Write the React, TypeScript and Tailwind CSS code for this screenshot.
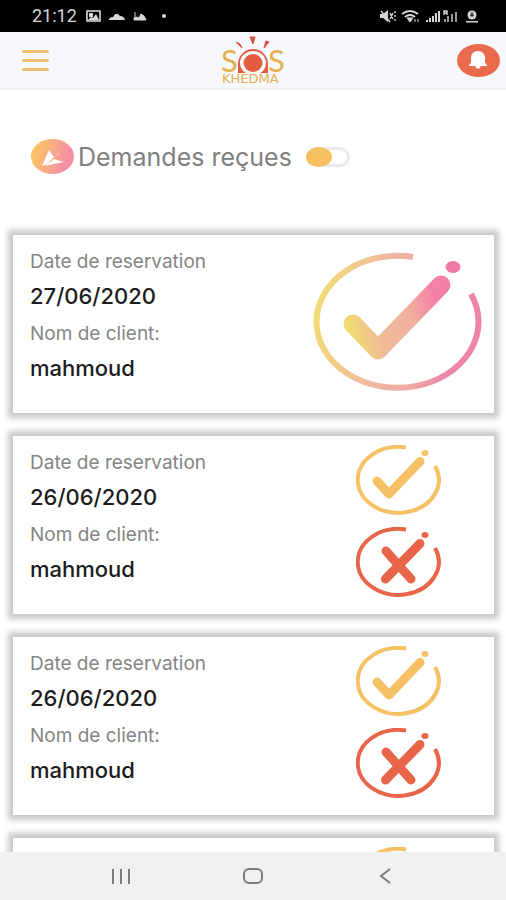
import { useId } from "react";
import clsx from "clsx";

type Reservation = {
  id: number;
  date: string;
  client: string;
  accepted: boolean;
};

const reservations: Reservation[] = [
  { id: 1, date: "27/06/2020", client: "mahmoud", accepted: true },
  { id: 2, date: "26/06/2020", client: "mahmoud", accepted: false },
  { id: 3, date: "26/06/2020", client: "mahmoud", accepted: false },
  { id: 4, date: "26/06/2020", client: "mahmoud", accepted: false },
];

const RING = "M100 5A81 66 0 1 0 158 42";

const AcceptedMark = () => {
  const gradient = useId();

  return (
    <svg viewBox="0 0 170 140" className="h-[140px] w-[170px]" fill="none" role="img" aria-label="Acceptée">
      <defs>
        <linearGradient id={gradient + "r"} gradientUnits="userSpaceOnUse" x1="0" y1="60" x2="165" y2="85">
          <stop offset="0" stopColor="#f3dc74" />
          <stop offset="0.4" stopColor="#efb9a0" />
          <stop offset="0.65" stopColor="#efa9a4" />
          <stop offset="0.85" stopColor="#ee84aa" />
        </linearGradient>
        <linearGradient id={gradient + "c"} gradientUnits="userSpaceOnUse" x1="32" y1="66" x2="130" y2="40">
          <stop offset="0" stopColor="#f1dc70" />
          <stop offset="0.3" stopColor="#f0bb98" />
          <stop offset="0.65" stopColor="#f2ada0" />
          <stop offset="0.9" stopColor="#f381a6" />
        </linearGradient>
      </defs>
      <path d={RING} stroke={`url(#${gradient}r)`} strokeWidth="6" />
      <path d="M40 72L65 98L128 33" stroke={`url(#${gradient}c)`} strokeWidth="19" strokeLinecap="round" strokeLinejoin="round" />
      <ellipse cx="140" cy="15" rx="7.5" ry="6" fill="#f07aa6" />
    </svg>
  );
};

const CheckMark = () => (
  <svg viewBox="0 0 170 140" className="h-[70px] w-[85px]" fill="none" stroke="#f5c164" aria-hidden="true">
    <path d={RING} strokeWidth="8" />
    <path d="M42 72L66 98L128 33" strokeWidth="18" strokeLinecap="round" strokeLinejoin="round" />
    <ellipse cx="138" cy="16" rx="7" ry="6" fill="#f5c164" stroke="none" />
  </svg>
);

const CrossMark = () => (
  <svg viewBox="0 0 170 140" className="h-[70px] w-[85px]" fill="none" stroke="#e8654a" aria-hidden="true">
    <path d={RING} strokeWidth="8" />
    <path d="M60 48L110 104M128 33L59 104" strokeWidth="18" strokeLinecap="round" />
    <ellipse cx="138" cy="16" rx="7" ry="6" fill="#e8654a" stroke="none" />
  </svg>
);

const StatusBar = () => (
  <div className="flex h-8 shrink-0 items-center justify-between bg-black pr-7 pl-8 text-[#d6d6d6]">
    <div className="flex items-center gap-2">
      <span className="font-['Roboto',sans-serif] text-lg leading-8">21:12</span>
      <svg viewBox="0 0 84 16" className="h-4 w-[84px]" fill="none" aria-hidden="true">
        <rect x="2" y="3" width="13" height="10" stroke="currentColor" strokeWidth="1.6" />
        <path d="M4 5h4v4H4zM3 12l3-3 2 1 3-4 3 6z" fill="currentColor" />
        <path d="M24 12q0-3 4-3 3-6 7-1 4 0 5 4z" fill="currentColor" />
        <path d="M50 4v8M49 12v-2l3-1 2 1 2-4 3 2 2 4z" stroke="currentColor" fill="currentColor" strokeWidth="1" />
        <circle cx="79" cy="8" r="2" fill="currentColor" />
      </svg>
    </div>
    <svg viewBox="0 0 98 16" className="h-4 w-[98px]" fill="currentColor" aria-hidden="true">
      <path d="M0 6h3l5-4v12l-5-4H0z" />
      <path d="M1 3l9 11M10 5l3 6M13 5l-3 6M15 3v2M15 7v2M15 11v2" stroke="currentColor" strokeWidth="1.4" />
      <path d="M22 6q8-6 16 0M25 9q5-4 10 0" fill="none" stroke="currentColor" strokeWidth="1.8" />
      <path d="M27 10h6l-3 4zM35 14v-3M38 14v-3" stroke="currentColor" />
      <path d="M46 14v-2h2v2zM49 14v-4h2v4zM52 14V8h2v6zM55 14V5h2v9zM58 14V3h2v11z" />
      <path d="M64 7V3h3v4M64 5h3M68 14V8M72 14V6M76 14V4M65 14v-3" fill="none" stroke="currentColor" strokeWidth="1.4" />
      <circle cx="92" cy="7" r="4.5" />
      <path d="M86 13h12v1.500H86z" />
      <path d="M92 4v5M90 7h4" stroke="#000" strokeWidth="1" />
    </svg>
  </div>
);

const Logo = () => (
  <svg viewBox="0 0 66 50" className="h-[50px] w-[66px]" role="img" aria-label="SOS Khedma">
    <path d="M18 38V29a15 15 0 0 1 30 0v9z" fill="#e25b42" />
    <ellipse cx="33" cy="28" rx="13" ry="12" fill="#fff" />
    <ellipse cx="33" cy="28" rx="9.5" ry="9" fill="#e25b42" />
    <path d="M16 7l4 2 2 4zM30 2h5l-2 7zM46 6l3 1-5 6z" fill="#d8503f" stroke="#d8503f" />
    <g fill="#e3b04b">
      <text x="1" y="37" fontSize="31" fontFamily="Lato, sans-serif">S</text>
      <text x="48" y="37" fontSize="31" fontFamily="Lato, sans-serif">S</text>
      <text x="2" y="48" fontSize="13" fontFamily="DejaVu Sans, sans-serif">KHEDMA</text>
    </g>
  </svg>
);

const Header = () => (
  <header className="grid h-[58px] shrink-0 grid-cols-3 items-center border-b-2 border-[#f0f0f2] bg-[#f7f8fd] pr-1.5 pl-[22px]">
    <button type="button" aria-label="Menu" className="flex w-[27px] flex-col gap-1.5">
      <span className="h-[3px] rounded-full bg-[#f0bf6b]" />
      <span className="h-[3px] rounded-full bg-[#f0bf6b]" />
      <span className="h-[3px] rounded-full bg-[#f0bf6b]" />
    </button>
    <div className="flex justify-center pr-4">
      <Logo />
    </div>
    <button
      type="button"
      aria-label="Notifications"
      className="flex h-[33px] w-[43px] items-center justify-center justify-self-end rounded-[50%] bg-[#ea6b4c]"
    >
      <svg viewBox="0 0 20 20" className="size-5" fill="#fff" aria-hidden="true">
        <path d="M10 1C5.500 1 3 4 3 8v4.500L.500 16h19L17 12.500V8c0-4-2.500-7-7-7z" />
        <path d="M7.500 16a2.500 2.800 0 0 0 5 0z" />
      </svg>
    </button>
  </header>
);

const ReservationCard = ({ date, client, accepted }: Omit<Reservation, "id">) => (
  <li className="flex h-[178px] shrink-0 bg-white pt-[13px] pl-[17px] shadow-[0_0_6px_5px_#c8c8c8]">
    <dl className="flex-1">
      <dt className="text-[19px] leading-7 text-[#858585]">Date de reservation</dt>
      <dd className="mb-1 text-[22px] leading-10 font-medium text-[#1c1c1c]">{date}</dd>
      <dt className="text-[19px] leading-7 text-[#858585]">Nom de client:</dt>
      <dd className="text-[22px] leading-10 font-medium text-[#1c1c1c]">{client}</dd>
    </dl>
    <div className={clsx("-mt-1 flex flex-col gap-3", accepted ? "pt-2 pr-[11px]" : "pr-[53px]")}>
      {accepted ? (
        <AcceptedMark />
      ) : (
        <>
          <button type="button" aria-label="Accepter"><CheckMark /></button>
          <button type="button" aria-label="Refuser"><CrossMark /></button>
        </>
      )}
    </div>
  </li>
);

const NavBar = () => (
  <nav className="flex h-12 shrink-0 items-center justify-center gap-28 bg-[#f1f1f1] text-[#7c7c7c]">
    <button type="button" aria-label="Applications récentes">
      <svg viewBox="0 0 20 20" className="size-5" stroke="currentColor" strokeWidth="2" aria-hidden="true">
        <path d="M2 3v15M10 3v15M18 3v15" />
      </svg>
    </button>
    <button type="button" aria-label="Accueil">
      <svg viewBox="0 0 20 20" className="size-5" fill="none" stroke="currentColor" strokeWidth="2" aria-hidden="true">
        <rect x="1" y="3" width="18" height="14" rx="5" />
      </svg>
    </button>
    <button type="button" aria-label="Retour">
      <svg viewBox="0 0 20 20" className="size-5" fill="none" stroke="currentColor" strokeWidth="2" aria-hidden="true">
        <path d="M15 3L6 10l9 7" />
      </svg>
    </button>
  </nav>
);

export default function App() {
  return (
    <div className="flex h-screen flex-col overflow-hidden bg-white font-['Inter',sans-serif]">
      <StatusBar />
      <Header />
      <main className="min-h-0 flex-1 overflow-y-auto [scrollbar-width:none]">
        <div className="flex h-[145px] items-center pb-3 pl-[31px]">
          <svg viewBox="0 0 43 35" className="h-[35px] w-[43px]" aria-hidden="true">
            <defs>
              <linearGradient id="send" x1="0" y1="0.3" x2="1" y2="0.6">
                <stop offset="0.1" stopColor="#f9c368" />
                <stop offset="0.85" stopColor="#f590a4" />
              </linearGradient>
            </defs>
            <ellipse cx="21.500" cy="17.500" rx="21.500" ry="17.500" fill="url(#send)" />
            <path d="M18 11l5 7-7 7-5 2zM14 27l9-7 10 3-10 2z" fill="#fff" />
            <path d="M23 13l3 2 3-3-2 5z" fill="#fbc0b8" />
          </svg>
          <label htmlFor="received" className="pl-1 text-[25px] leading-9 text-[#808080]">
            Demandes reçues
          </label>
          <input
            id="received"
            type="checkbox"
            className="ml-3.5 flex h-5 w-11 appearance-none items-center rounded-full border-3 border-[#ebebeb] bg-white before:-ml-[3px] before:h-5 before:w-[26px] before:shrink-0 before:rounded-[50%] before:bg-[#f8bf60]"
          />
        </div>
        <ul className="flex flex-col gap-[23px] pr-3 pl-[13px]">
          {reservations.map(({ id, ...reservation }) => (
            <ReservationCard key={id} {...reservation} />
          ))}
        </ul>
      </main>
      <NavBar />
    </div>
  );
}
